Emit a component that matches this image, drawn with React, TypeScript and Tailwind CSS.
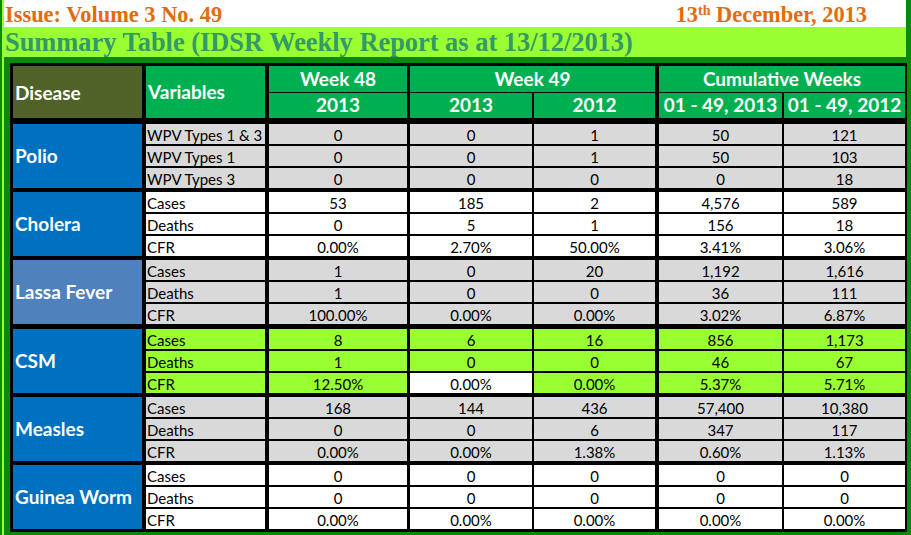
import React from "react";

type Group = {
  name: string;
  bg: string;
  rowBg: string;
  rows: { label: string; vals: string[]; white?: number[] }[];
};

const groups: Group[] = [
  {
    name: "Polio",
    bg: "bg-[#0070c0]",
    rowBg: "bg-[#d9d9d9]",
    rows: [
      { label: "WPV Types 1 & 3", vals: ["0", "0", "1", "50", "121"] },
      { label: "WPV Types 1", vals: ["0", "0", "1", "50", "103"] },
      { label: "WPV Types 3", vals: ["0", "0", "0", "0", "18"] },
    ],
  },
  {
    name: "Cholera",
    bg: "bg-[#0070c0]",
    rowBg: "bg-white",
    rows: [
      { label: "Cases", vals: ["53", "185", "2", "4,576", "589"] },
      { label: "Deaths", vals: ["0", "5", "1", "156", "18"] },
      { label: "CFR", vals: ["0.00%", "2.70%", "50.00%", "3.41%", "3.06%"] },
    ],
  },
  {
    name: "Lassa Fever",
    bg: "bg-[#4f81bd]",
    rowBg: "bg-[#d9d9d9]",
    rows: [
      { label: "Cases", vals: ["1", "0", "20", "1,192", "1,616"] },
      { label: "Deaths", vals: ["1", "0", "0", "36", "111"] },
      { label: "CFR", vals: ["100.00%", "0.00%", "0.00%", "3.02%", "6.87%"] },
    ],
  },
  {
    name: "CSM",
    bg: "bg-[#0070c0]",
    rowBg: "bg-[#99ff33]",
    rows: [
      { label: "Cases", vals: ["8", "6", "16", "856", "1,173"] },
      { label: "Deaths", vals: ["1", "0", "0", "46", "67"] },
      { label: "CFR", vals: ["12.50%", "0.00%", "0.00%", "5.37%", "5.71%"], white: [1] },
    ],
  },
  {
    name: "Measles",
    bg: "bg-[#0070c0]",
    rowBg: "bg-[#d9d9d9]",
    rows: [
      { label: "Cases", vals: ["168", "144", "436", "57,400", "10,380"] },
      { label: "Deaths", vals: ["0", "0", "6", "347", "117"] },
      { label: "CFR", vals: ["0.00%", "0.00%", "1.38%", "0.60%", "1.13%"] },
    ],
  },
  {
    name: "Guinea Worm",
    bg: "bg-[#0070c0]",
    rowBg: "bg-white",
    rows: [
      { label: "Cases", vals: ["0", "0", "0", "0", "0"] },
      { label: "Deaths", vals: ["0", "0", "0", "0", "0"] },
      { label: "CFR", vals: ["0.00%", "0.00%", "0.00%", "0.00%", "0.00%"] },
    ],
  },
];

const colCls = [
  "ml-[4px] w-[138px]",
  "ml-[3px] w-[122px]",
  "ml-[2px] w-[121px]",
  "ml-[4px] w-[123px]",
  "ml-[2px] w-[121px]",
];

const groupMt = ["mt-[6px]", "mt-[4px]", "mt-[4px]", "mt-[5px]", "mt-[4px]", "mt-[4px]"];

const serif = { fontFamily: '"Liberation Serif", "Times New Roman", serif' };
const sans = { fontFamily: 'Lato, "Noto Sans", sans-serif' };

export default function App() {
  return (
    <div className="w-[911px] h-[535px] bg-[#0a8a0a] pl-[2px] flex overflow-hidden">
      <div className="w-[904px] border-l-[2px] border-[#99ff33] flex flex-col">
        <div
          className="h-[27px] bg-white flex justify-between items-end pl-[1px] pr-[39px] text-[22.4px] font-bold text-[#e36c0a] leading-[22px] pb-[1px]"
          style={serif}
        >
          <span>Issue: Volume 3 No. 49</span>
          <span>
            13<sup className="text-[14px]">th</sup> December, 2013
          </span>
        </div>
        <div
          className="h-[30px] bg-[#99ff33] pl-[1px] flex items-center text-[26.4px] font-bold text-[#339966] leading-[26px]"
          style={serif}
        >
          Summary Table (IDSR Weekly Report as at 13/12/2013)
        </div>
        <div className="flex-1 pl-[6px] pt-[6px]">
          <div className="w-[897px] bg-black pt-[3px] pl-[3px] pr-[2px] pb-[3px]" style={sans}>
            <div className="flex h-[52px] text-white font-bold text-[19px]">
              <div className="w-[129px] bg-[#4f6228] flex items-center pl-[2px] pt-[3px]">Disease</div>
              <div className="ml-[4px] w-[119px] bg-[#00b050] flex items-center pl-[2px]">Variables</div>
              <div className="ml-[4px] w-[138px] flex flex-col">
                <div className="h-[26px] bg-[#00b050] flex items-center justify-center">Week 48</div>
                <div className="mt-[1px] h-[25px] bg-[#00b050] flex items-center justify-center">2013</div>
              </div>
              <div className="ml-[3px] w-[245px] flex flex-col">
                <div className="h-[26px] bg-[#00b050] flex items-center justify-center">Week 49</div>
                <div className="mt-[1px] h-[25px] flex">
                  <div className="w-[122px] bg-[#00b050] flex items-center justify-center">2013</div>
                  <div className="ml-[2px] w-[121px] bg-[#00b050] flex items-center justify-center">2012</div>
                </div>
              </div>
              <div className="ml-[4px] w-[246px] flex flex-col">
                <div className="h-[26px] bg-[#00b050] flex items-center justify-center">Cumulative Weeks</div>
                <div className="mt-[1px] h-[25px] flex">
                  <div className="w-[123px] bg-[#00b050] flex items-center justify-center">01 - 49, 2013</div>
                  <div className="ml-[2px] w-[121px] bg-[#00b050] flex items-center justify-center">01 - 49, 2012</div>
                </div>
              </div>
            </div>
            {groups.map((g, gi) => (
              <div key={g.name} className={`flex h-[64px] ${groupMt[gi]}`}>
                <div
                  className={`w-[129px] ${g.bg} flex items-center pl-[2px] text-white font-bold text-[19px] whitespace-nowrap`}
                >
                  {g.name}
                </div>
                <div className="flex flex-col gap-[2px]">
                  {g.rows.map((r) => (
                    <div key={r.label} className="flex h-[20px] text-[15px] text-black leading-[20px]">
                      <div className={`ml-[4px] w-[119px] ${g.rowBg} pl-[1px] pt-[1px] whitespace-nowrap`}>
                        {r.label}
                      </div>
                      {r.vals.map((v, vi) => (
                        <div
                          key={vi}
                          className={`${colCls[vi]} ${
                            r.white && r.white.includes(vi) ? "bg-white" : g.rowBg
                          } text-center pt-[1px]`}
                        >
                          {v}
                        </div>
                      ))}
                    </div>
                  ))}
                </div>
              </div>
            ))}
          </div>
        </div>
      </div>
    </div>
  );
}
